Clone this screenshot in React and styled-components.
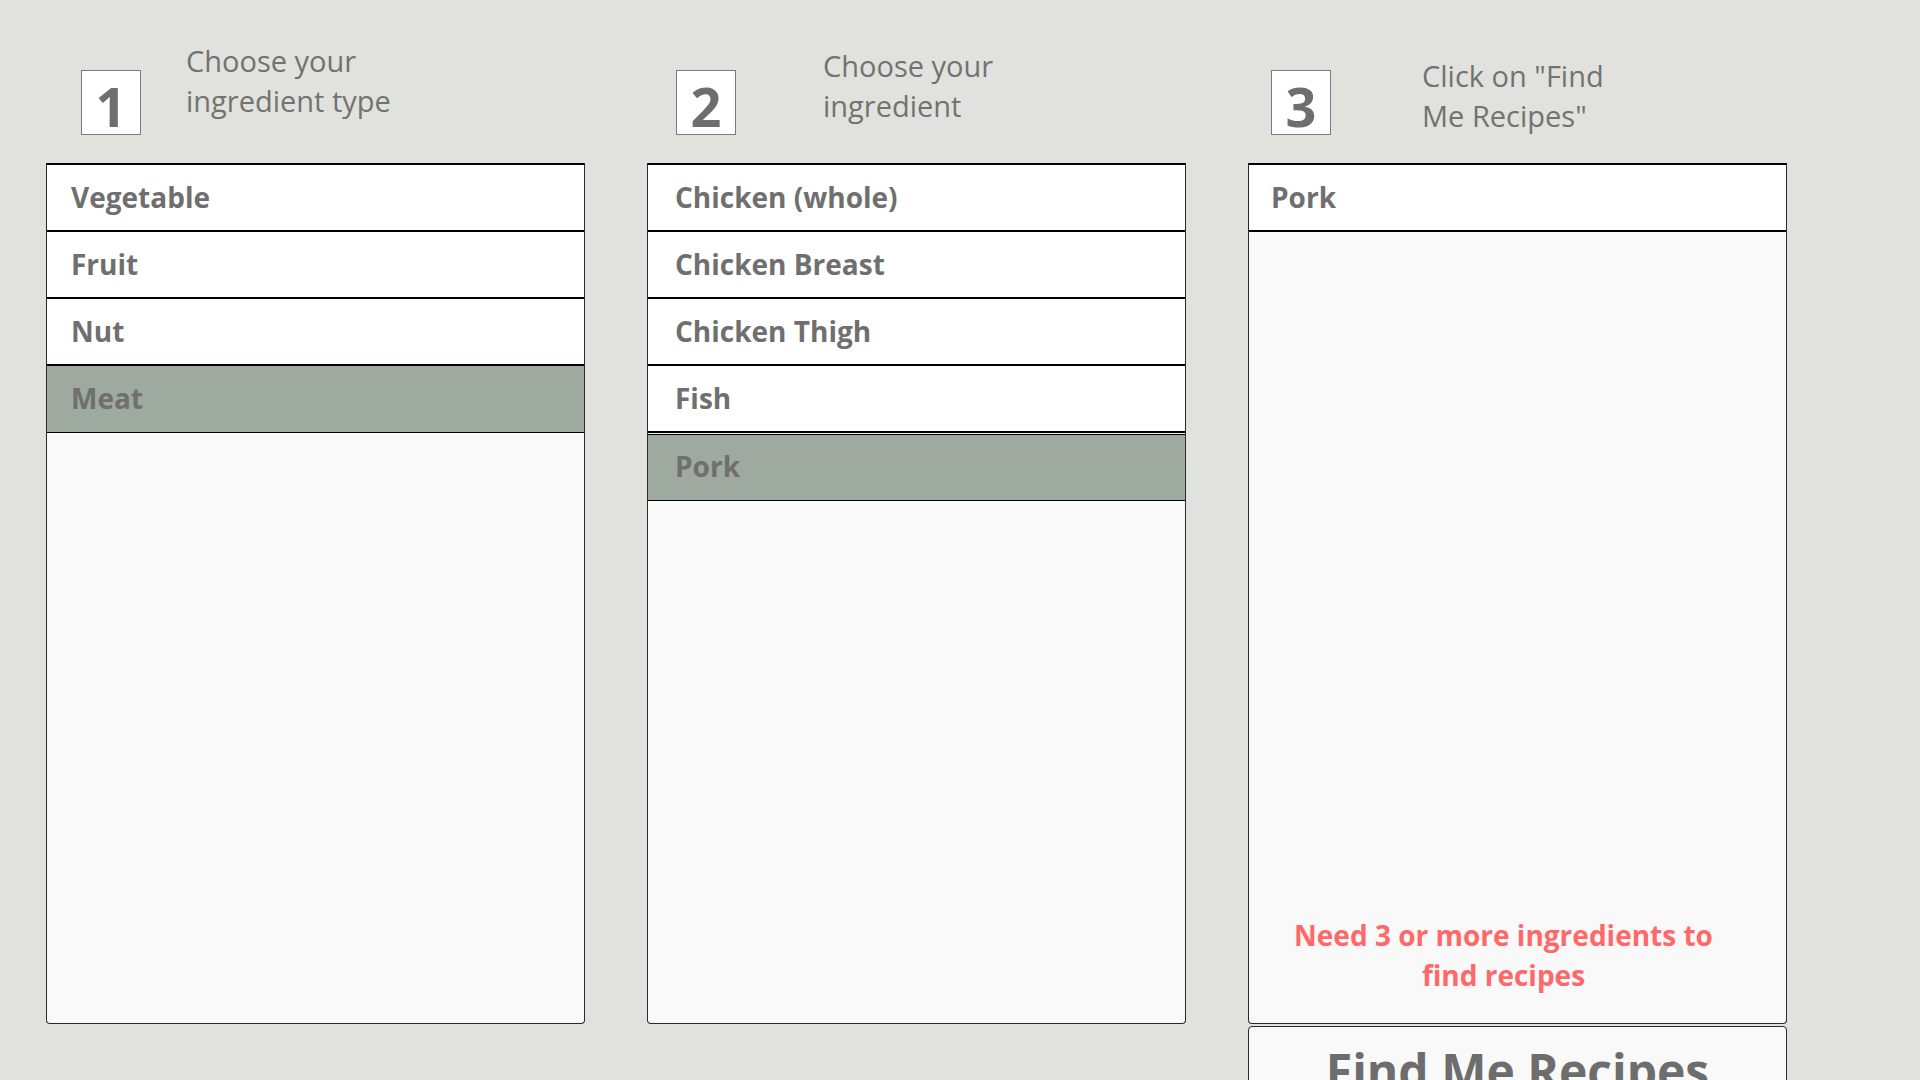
import React from 'react';
import styled, { createGlobalStyle } from 'styled-components';

const GlobalStyle = createGlobalStyle`
  html, body {
    margin: 0;
    padding: 0;
    overflow: hidden;
    background: #e1e2dd;
    font-family: "Open Sans", "Noto Sans", "Liberation Sans", sans-serif;
    color: #707070;
  }
`;

const Page = styled.div`
  display: flex;
  align-items: flex-start;
  gap: 62px;
  padding-left: 46px;
  width: 1920px;
  height: 1080px;
  box-sizing: border-box;
  overflow: hidden;
`;

const Column = styled.div`
  width: 539px;
  flex: none;
  display: flex;
  flex-direction: column;
`;

const Header = styled.div`
  height: 163px;
  flex: none;
  display: flex;
  align-items: flex-start;
`;

const NumberBox = styled.div`
  margin-top: 70px;
  margin-left: ${(p) => p.offset}px;
  width: 60px;
  height: 65px;
  box-sizing: border-box;
  background: #ffffff;
  border: 1px solid #7a7a7a;
  display: flex;
  align-items: center;
  justify-content: center;
  font-size: 54px;
  font-weight: 700;
  line-height: 1;
  padding-top: 7px;
  color: #6e6e6e;
`;

const StepText = styled.div`
  margin-top: ${(p) => p.top}px;
  margin-left: ${(p) => p.gap}px;
  font-size: 29px;
  line-height: 40px;
  color: #727272;
  white-space: nowrap;
`;

const Panel = styled.div`
  height: 861px;
  flex: none;
  box-sizing: border-box;
  background: #f9f9f9;
  border: 1px solid #2a2a2a;
  border-top: 2px solid #000;
  border-radius: 0 0 4px 4px;
  display: flex;
  flex-direction: column;
`;

const Row = styled.div`
  height: ${(p) => (p.detached ? 68 : 67)}px;
  flex: none;
  box-sizing: border-box;
  border-bottom: ${(p) => (p.selected ? 1 : 2)}px solid #000;
  ${(p) => p.detached && 'border-top: 1px solid #f4f4f4; box-shadow: inset 0 1px 0 #000;'}
  background: ${(p) => (p.selected ? '#9eaa9f' : '#ffffff')};
  display: flex;
  align-items: center;
  padding-left: ${(p) => p.indent}px;
  padding-bottom: 2px;
  font-size: 28px;
  font-weight: 700;
  color: #6f6f6f;
`;

const Warning = styled.div`
  margin-top: auto;
  padding: 0 48px 28px 20px;
  text-align: center;
  font-size: 28px;
  font-weight: 700;
  line-height: 40px;
  color: #ff6868;
`;

const FindButton = styled.button`
  margin-top: 2px;
  height: 120px;
  flex: none;
  background: #f9f9f9;
  border: 1px solid #2a2a2a;
  border-radius: 4px;
  font-family: inherit;
  font-size: 48px;
  font-weight: 700;
  color: #6d6d6d;
  display: flex;
  justify-content: center;
  align-items: flex-start;
  padding: 11px 0 0 0;
  cursor: pointer;
`;

const steps = [
  {
    n: 1,
    box: 35,
    gap: 45,
    top: 41,
    text: ['Choose your', 'ingredient type'],
    indent: 24,
    items: ['Vegetable', 'Fruit', 'Nut', 'Meat'],
    selected: 'Meat',
  },
  {
    n: 2,
    box: 29,
    gap: 87,
    top: 46,
    text: ['Choose your', 'ingredient'],
    indent: 27,
    items: ['Chicken (whole)', 'Chicken Breast', 'Chicken Thigh', 'Fish', 'Pork'],
    selected: 'Pork',
  },
];

function Step({ step }) {
  return (
    <Header>
      <NumberBox offset={step.box}>{step.n}</NumberBox>
      <StepText top={step.top} gap={step.gap}>
        {step.text[0]}
        <br />
        {step.text[1]}
      </StepText>
    </Header>
  );
}

export default function App() {
  return (
    <>
      <GlobalStyle />
      <Page>
        {steps.map((step) => (
          <Column key={step.n}>
            <Step step={step} />
            <Panel>
              {step.items.map((item) => (
                <Row
                  key={item}
                  indent={step.indent}
                  selected={item === step.selected}
                  detached={step.n === 2 && item === step.selected}
                >
                  {item}
                </Row>
              ))}
            </Panel>
          </Column>
        ))}
        <Column>
          <Step
            step={{ n: 3, box: 23, gap: 91, top: 56, text: ['Click on "Find', 'Me Recipes"'] }}
          />
          <Panel>
            <Row indent={22}>Pork</Row>
            <Warning>Need 3 or more ingredients to find recipes</Warning>
          </Panel>
          <FindButton>Find Me Recipes</FindButton>
        </Column>
      </Page>
    </>
  );
}
